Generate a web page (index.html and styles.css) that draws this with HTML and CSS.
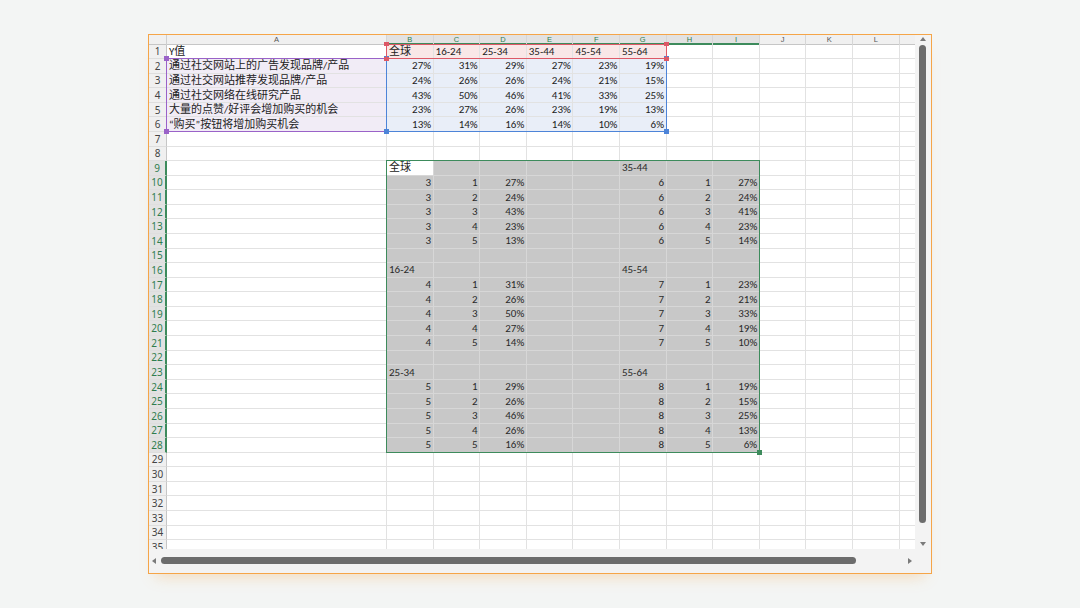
FILE: index.html
```html
<!DOCTYPE html>
<html lang="zh-CN">
<head>
<meta charset="utf-8">
<title>Excel 数据</title>
<link rel="stylesheet" href="styles.css">
</head>
<body>
<div class="frame">
  <div class="sheet">
    <div class="layer cells" id="cells"></div>
    <div class="layer marks">
      <div class="rng rng-p"><i class="hd tl"></i><i class="hd tr"></i><i class="hd bl"></i><i class="hd br"></i></div>
      <div class="rng rng-b"><i class="hd tl"></i><i class="hd tr"></i><i class="hd bl"></i><i class="hd br"></i></div>
      <div class="rng rng-r"><i class="hd tl"></i><i class="hd tr"></i><i class="hd bl"></i><i class="hd br"></i></div>
      <div class="rng rng-g"><i class="hd br"></i></div>
    </div>
  </div>
  <div class="vbar">
    <span class="arr up"></span>
    <span class="vthumb"></span>
    <span class="arr down"></span>
  </div>
  <div class="hbar">
    <span class="arr left"></span>
    <span class="hthumb"></span>
    <span class="arr right"></span>
  </div>
  <div class="corner-box"></div>
</div>
<script src="script.js"></script>
</body>
</html>
```
FILE: styles.css
```css
* { box-sizing: border-box; }
html, body { margin: 0; height: 100%; }
body {
  background: #f3f5f4;
  display: flex;
  align-items: center;
  justify-content: center;
  font-family: "Carlito", "Lato", "Noto Sans CJK SC", sans-serif;
}
.frame {
  width: 784px;
  height: 540px;
  border: 1.5px solid #f5a548;
  background: #f3f3f3;
  display: grid;
  grid-template-columns: 766px 15px;
  grid-template-rows: 514px 23px;
  box-shadow: 0 10px 14px -8px rgba(245, 165, 72, 0.35);
}
.sheet {
  overflow: hidden;
  display: grid;
  background: #fff;
}
.layer {
  grid-area: 1 / 1;
  display: grid;
  grid-template-columns: 18px 220px repeat(12, 46.6px);
  grid-template-rows: 9.5px repeat(35, 14.58px);
}
.marks { pointer-events: none; }

/* headers */
.corner {
  background: #f0f0f0;
  border-right: 1px solid #cfcfcf;
  box-shadow: inset 0 -1px 0 #c6c6c6;
}
.ch {
  background: #f0f0f0;
  border-right: 1px solid #d6d6d6;
  box-shadow: inset 0 -1px 0 #c6c6c6;
  font: 7.5px/9.5px "Liberation Sans", sans-serif;
  color: #555;
  display: flex;
  align-items: center;
  justify-content: center;
}
.ch.hl {
  background: #e2e2e2;
  color: #2f7d4f;
  box-shadow: inset 0 -2px 0 #3d8b5c;
}
.rh {
  background: #f0f0f0;
  border-right: 1px solid #c6c6c6;
  border-bottom: 1px solid #dedede;
  font: 10px/1 "Noto Sans", sans-serif;
  color: #444;
  display: flex;
  align-items: center;
  justify-content: center;
}
.rh.hl {
  background: #e2e2e2;
  color: #2f7d4f;
  border-right: 2px solid #3d8b5c;
}

/* cells */
.c {
  border-right: 1px solid #e2e2e2;
  border-bottom: 1px solid #e2e2e2;
  font-size: 11px;
  line-height: 13px;
  padding: 0 2px;
  white-space: nowrap;
  overflow: hidden;
  display: flex;
  align-items: center;
  color: #222;
}
.c.num { justify-content: flex-end; padding-right: 1.5px; }
.c.tr { background: #f9e7e7; }
.c.tp { background: #f1ecf6; }
.c.tb { background: #e9eef8; }
.c.gr { background: #c8c8c8; border-color: #d7d7d7; color: #2a2a2a; }
.c.wh { background: #fff; border-color: #d7d7d7; }

/* range highlight boxes */
.rng {
  position: relative;
  margin: -1px 0 0 -1px;
  border: 1.5px solid var(--c);
}
.rng-p { --c: #9a62c8; grid-column: 2 / 3; grid-row: 3 / 8; }
.rng-b { --c: #4d84d8; grid-column: 3 / 9; grid-row: 3 / 8; }
.rng-r { --c: #dd5866; grid-column: 3 / 9; grid-row: 2 / 3; }
.rng-g { --c: #3d8b5c; grid-column: 3 / 11; grid-row: 10 / 30; }
.hd {
  position: absolute;
  width: 4.5px;
  height: 4.5px;
  background: var(--c);
}
.hd.tl { left: -3px; top: -3px; }
.hd.tr { right: -3px; top: -3px; }
.hd.bl { left: -3px; bottom: -3px; }
.hd.br { right: -3px; bottom: -3px; }

/* scroll bars */
.vbar {
  display: flex;
  flex-direction: column;
  align-items: center;
  padding: 2px 0 3px;
  background: #f3f3f3;
}
.vthumb {
  width: 6.5px;
  height: 478px;
  margin-top: 4px;
  border-radius: 4px;
  background: #6c6c6c;
}
.hbar {
  display: flex;
  align-items: center;
  padding: 0 3px 0 3px;
  background: #f3f3f3;
}
.hthumb {
  width: 695px;
  height: 7px;
  margin-left: 5px;
  border-radius: 4px;
  background: #6c6c6c;
}
.corner-box { background: #f3f3f3; }
.arr { width: 0; height: 0; display: block; }
.arr.up {
  border-left: 3.5px solid transparent;
  border-right: 3.5px solid transparent;
  border-bottom: 4px solid #7a7a7a;
}
.arr.down {
  margin-top: auto;
  border-left: 3.5px solid transparent;
  border-right: 3.5px solid transparent;
  border-top: 4px solid #7a7a7a;
}
.arr.left {
  border-top: 3.5px solid transparent;
  border-bottom: 3.5px solid transparent;
  border-right: 4px solid #7a7a7a;
}
.arr.right {
  margin-left: auto;
  border-top: 3.5px solid transparent;
  border-bottom: 3.5px solid transparent;
  border-left: 4px solid #7a7a7a;
}
```
FILE: script.js
```js
(function () {
  var COLS = 'ABCDEFGHIJKLM'.split('');
  var d = {};
  var heads = ['全球', '16-24', '25-34', '35-44', '45-54', '55-64'];
  var labels = [
    '通过社交网站上的广告发现品牌/产品',
    '通过社交网站推荐发现品牌/产品',
    '通过社交网络在线研究产品',
    '大量的点赞/好评会增加购买的机会',
    '“购买”按钮将增加购买机会'
  ];
  var vals = [
    [27, 31, 29, 27, 23, 19],
    [24, 26, 26, 24, 21, 15],
    [43, 50, 46, 41, 33, 25],
    [23, 27, 26, 23, 19, 13],
    [13, 14, 16, 14, 10, 6]
  ];
  d.A1 = 'Y值';
  heads.forEach(function (t, i) { d[COLS[i + 1] + 1] = t; });
  labels.forEach(function (t, i) { d['A' + (i + 2)] = t; });
  vals.forEach(function (row, r) {
    row.forEach(function (v, c) { d[COLS[c + 1] + (r + 2)] = v + '%'; });
  });

  // chart helper block: [start row, start column index, group number, series index]
  var groups = [[9, 1, 3, 0], [9, 6, 6, 3], [16, 1, 4, 1], [16, 6, 7, 4], [23, 1, 5, 2], [23, 6, 8, 5]];
  groups.forEach(function (g) {
    var r0 = g[0], ci = g[1];
    d[COLS[ci] + r0] = heads[g[3]];
    for (var i = 1; i <= 5; i++) {
      d[COLS[ci] + (r0 + i)] = String(g[2]);
      d[COLS[ci + 1] + (r0 + i)] = String(i);
      d[COLS[ci + 2] + (r0 + i)] = vals[i - 1][g[3]] + '%';
    }
  });

  var host = document.getElementById('cells');
  var frag = document.createDocumentFragment();
  function mk(cls, t) {
    var e = document.createElement('div');
    e.className = cls;
    if (t != null) e.textContent = t;
    frag.appendChild(e);
  }
  mk('corner');
  // the last column is only partly visible; its letter sits under the scroll bar
  COLS.forEach(function (c, i) {
    mk('ch' + (i >= 1 && i <= 8 ? ' hl' : ''), i < COLS.length - 1 ? c : null);
  });
  for (var r = 1; r <= 35; r++) {
    mk('rh' + (r >= 9 && r <= 28 ? ' hl' : ''), r);
    COLS.forEach(function (c, i) {
      var t = d[c + r];
      var cls = 'c';
      if (t != null && /^\d+%?$/.test(t)) cls += ' num';
      if (r === 1 && i >= 1 && i <= 6) cls += ' tr';
      else if (r >= 2 && r <= 6 && i === 0) cls += ' tp';
      else if (r >= 2 && r <= 6 && i >= 1 && i <= 6) cls += ' tb';
      else if (r >= 9 && r <= 28 && i >= 1 && i <= 8) cls += (r === 9 && i === 1) ? ' wh' : ' gr';
      mk(cls, t);
    });
  }
  host.appendChild(frag);
})();
```
